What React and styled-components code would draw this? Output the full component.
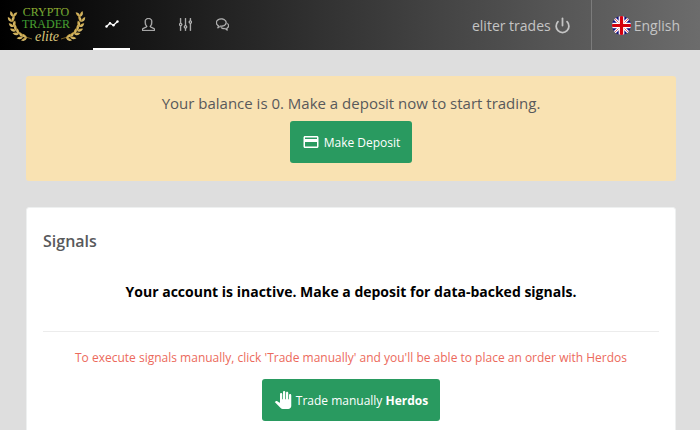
import React from 'react'
import styled, { createGlobalStyle } from 'styled-components'
import { MdCreditCard, MdPanTool } from 'react-icons/md'
import { SlUser, SlEqualizer, SlBubbles } from 'react-icons/sl'
import { Power } from 'lucide-react'

const GlobalStyle = createGlobalStyle`
    * {
        box-sizing: border-box;
    }
    body {
        margin: 0;
        background: #dedede;
        color: #58595b;
        font-family: 'Open Sans', 'Noto Sans', sans-serif;
        font-size: 14px;
    }
`

const Header = styled.header`
    display: flex;
    height: 50px;
    background: linear-gradient(to right, #000, #6c6c6c);
`
const LogoLink = styled.a`
    display: block;
    width: 93px;
    height: 50px;
`
const Nav = styled.nav`
    display: flex;
    flex: 1;
`
const NavLink = styled.a`
    display: flex;
    align-items: center;
    justify-content: center;
    width: 37px;
    font-size: 13px;
    color: ${props => props.$active ? '#fff' : '#c0c0c0'};
    border-bottom: 2px solid ${props => props.$active ? '#fff' : 'transparent'};

    svg {
        stroke-width: 30;
    }
`
const HeaderButton = styled.button`
    display: flex;
    align-items: center;
    gap: 3px;
    padding: 0 20px;
    border: 0;
    border-left: ${props => props.$divided ? '1px solid #7c7c7c' : '0'};
    background: none;
    color: #c4c4c4;
    font: inherit;
    cursor: pointer;
`
const Main = styled.main`
    display: flex;
    flex-direction: column;
    gap: 26px;
    padding: 26px 24px 26px 26px;
`
const DepositNotice = styled.section`
    display: flex;
    flex-direction: column;
    align-items: center;
    gap: 6px;
    padding: 16px 16px 18px;
    border-radius: 3px;
    background: #f9e2b2;
`
const NoticeText = styled.p`
    margin: 0;
    font-size: 15px;
    line-height: 23px;
    text-align: center;
`
const Card = styled.section`
    padding: 22px 16px 24px;
    border: 1px solid #eef0f0;
    border-radius: 3px;
    background: #fff;
`
const CardTitle = styled.h2`
    margin: 0;
    font-size: 16px;
    font-weight: 600;
    line-height: 23px;
`
const InactiveText = styled.p`
    margin: 28px 0;
    color: #000;
    font-weight: 700;
    line-height: 22px;
    text-align: center;
`
const Signals = styled.div`
    display: flex;
    flex-direction: column;
    align-items: center;
    gap: 11px;
    padding-top: 16px;
    border-top: 1px solid #ececec;
`
const Hint = styled.p`
    margin: 0;
    color: #ec6a5c;
    font-size: 12px;
    line-height: 20px;
    text-align: center;
`
const ActionButton = styled.button`
    display: flex;
    align-items: center;
    gap: 4px;
    height: 42px;
    padding: 0 12px;
    border: 0;
    border-radius: 3px;
    background: #299a60;
    color: #fff;
    font: inherit;
    font-size: 12px;
    cursor: pointer;
`

// points along a laurel stem: x, y, direction of growth
const stemPoints = [
    [27, 38, 190],
    [23, 37, 202],
    [19, 34, 218],
    [16, 31, 232],
    [14, 27, 248],
    [12, 22, 262],
    [13, 17, 280]
]

const leafPath = 'M0 0Q3 -3.2 6.5 0Q3 2.2 0 0'

const Branch = (props)=>(
    <g {...props}>
        <path d="M13 17Q11 35 32 39" fill="none" stroke="#a8842c" strokeWidth="0.7" />
        {stemPoints.map(([x, y, angle])=>
            <g key={y} transform={`translate(${x} ${y}) rotate(${angle})`}>
                <path d={leafPath} transform="rotate(-32)" />
                <path d={leafPath} transform="rotate(32)" />
            </g>
        )}
    </g>
)

const Logo = ()=>(
    <svg width="93" height="50" viewBox="0 0 93 50" role="img" aria-label="Crypto Trader elite">
        <defs>
            <linearGradient id="crypto" x1="0" y1="0" x2="0" y2="1">
                <stop offset="0" stopColor="#b5bd34" />
                <stop offset="1" stopColor="#3f9931" />
            </linearGradient>
            <linearGradient id="trader" x1="0" y1="0" x2="0" y2="1">
                <stop offset="0" stopColor="#2b8f34" />
                <stop offset="1" stopColor="#62b32d" />
            </linearGradient>
            <linearGradient id="gold" gradientUnits="userSpaceOnUse" x1="0" y1="-2" x2="0" y2="2">
                <stop offset="0" stopColor="#e3cd88" />
                <stop offset="1" stopColor="#b98d24" />
            </linearGradient>
        </defs>
        <Branch fill="url(#gold)" />
        <Branch fill="url(#gold)" transform="translate(93 0) scale(-1 1)" />
        <g textAnchor="middle" fontFamily="'Liberation Serif', serif">
            <text x="46" y="16" fontSize="12" fill="url(#crypto)">CRYPTO</text>
            <text x="46" y="28" fontSize="12" fill="url(#trader)">TRADER</text>
            <text x="47" y="41" fontSize="14" fontStyle="italic" fill="#dcc77c">elite</text>
        </g>
    </svg>
)

const TrendIcon = ()=>(
    <svg width="14" height="14" viewBox="0 0 14 14" fill="currentColor" aria-hidden="true">
        <path d="M1.5 9.5L5 6.3L8.5 8.3L12.5 4.5" fill="none" stroke="currentColor" style={{ strokeWidth: 1.3 }} />
        <circle cx="1.5" cy="9.5" r="1.2" />
        <circle cx="5" cy="6.3" r="1.2" />
        <circle cx="8.5" cy="8.3" r="1.2" />
        <circle cx="12.5" cy="4.5" r="1.2" />
    </svg>
)

const FlagIcon = ()=>(
    <svg width="19" height="19" viewBox="0 0 20 20" aria-hidden="true">
        <clipPath id="flag"><circle cx="10" cy="10" r="10" /></clipPath>
        <g clipPath="url(#flag)">
            <path d="M0 0h20v20H0z" fill="#101080" />
            <path d="M0 0L20 20M20 0L0 20" stroke="#fff" strokeWidth="3" />
            <path d="M0 0L20 20M20 0L0 20" stroke="#d80f1b" strokeWidth="0.7" />
            <path d="M10 0v20M0 10h20" stroke="#fff" strokeWidth="6" />
            <path d="M10 0v20M0 10h20" stroke="#d5000d" strokeWidth="3.4" />
        </g>
    </svg>
)

const App = ()=>(
    <>
        <GlobalStyle />
        <Header>
            <LogoLink href="#home"><Logo /></LogoLink>
            <Nav>
                <NavLink href="#trade" aria-label="Trade" $active><TrendIcon /></NavLink>
                <NavLink href="#account" aria-label="Account"><SlUser /></NavLink>
                <NavLink href="#settings" aria-label="Settings"><SlEqualizer /></NavLink>
                <NavLink href="#support" aria-label="Support"><SlBubbles /></NavLink>
            </Nav>
            <HeaderButton type="button">
                eliter trades <Power size={17} strokeWidth={2.5} />
            </HeaderButton>
            <HeaderButton type="button" $divided>
                <FlagIcon /> English
            </HeaderButton>
        </Header>
        <Main>
            <DepositNotice>
                <NoticeText>Your balance is 0. Make a deposit now to start trading.</NoticeText>
                <ActionButton type="button">
                    <MdCreditCard size={18} />
                    Make Deposit
                </ActionButton>
            </DepositNotice>
            <Card>
                <CardTitle>Signals</CardTitle>
                <InactiveText>Your account is inactive. Make a deposit for data-backed signals.</InactiveText>
                <Signals>
                    <Hint>To execute signals manually, click 'Trade manually' and you'll be able to place an order with Herdos</Hint>
                    <ActionButton type="button">
                        <MdPanTool size={18} />
                        <span>Trade manually <b>Herdos</b></span>
                    </ActionButton>
                </Signals>
            </Card>
        </Main>
    </>
)

export default App
